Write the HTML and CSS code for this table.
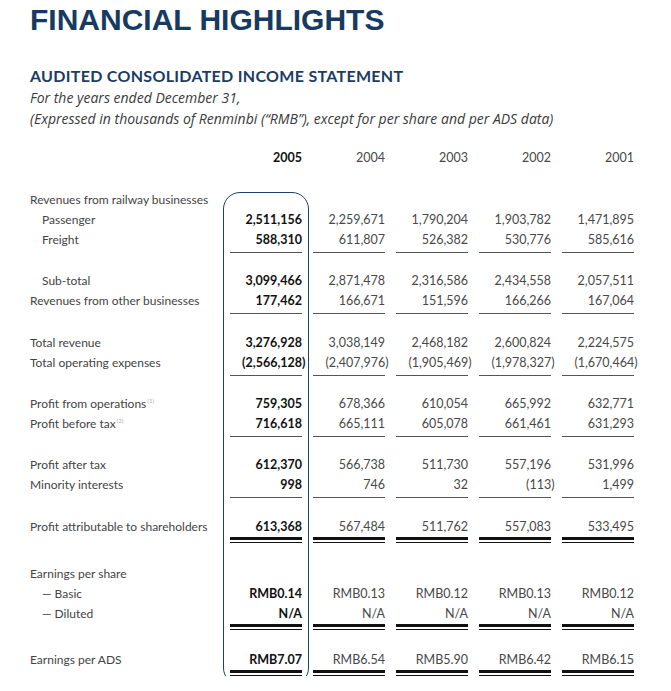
FILE: index.html
```html
<!DOCTYPE html>
<html lang="en">
<head>
<meta charset="utf-8">
<title>Financial Highlights</title>
<link rel="stylesheet" href="styles.css">
</head>
<body>
<div class="page">
  <h1 class="title">FINANCIAL HIGHLIGHTS</h1>
  <h2 class="sub">AUDITED CONSOLIDATED INCOME STATEMENT</h2>
  <p class="note first">For the years ended December 31,</p>
  <p class="note">(Expressed in thousands of Renminbi (“RMB”), except for per share and per ADS data)</p>

  <div class="fin">
    <div class="box"></div>

    <div class="l"></div><div class="n yr b">2005</div><div class="n yr">2004</div><div class="n yr">2003</div><div class="n yr">2002</div><div class="n yr">2001</div>
    <div class="gap h22"></div>

    <div class="l">Revenues from railway businesses</div><div class="n"></div><div class="n"></div><div class="n"></div><div class="n"></div><div class="n"></div>
    <div class="l in">Passenger</div><div class="n b">2,511,156</div><div class="n">2,259,671</div><div class="n">1,790,204</div><div class="n">1,903,782</div><div class="n">1,471,895</div>
    <div class="l in">Freight</div><div class="n b u">588,310</div><div class="n u">611,807</div><div class="n u">526,382</div><div class="n u">530,776</div><div class="n u">585,616</div>
    <div class="gap h18"></div>

    <div class="l in">Sub-total</div><div class="n b">3,099,466</div><div class="n">2,871,478</div><div class="n">2,316,586</div><div class="n">2,434,558</div><div class="n">2,057,511</div>
    <div class="l">Revenues from other businesses</div><div class="n b u">177,462</div><div class="n u">166,671</div><div class="n u">151,596</div><div class="n u">166,266</div><div class="n u">167,064</div>
    <div class="gap h19"></div>

    <div class="l">Total revenue</div><div class="n b">3,276,928</div><div class="n">3,038,149</div><div class="n">2,468,182</div><div class="n">2,600,824</div><div class="n">2,224,575</div>
    <div class="l">Total operating expenses</div><div class="n b u"><span class="ng">(2,566,128)</span></div><div class="n u"><span class="ng">(2,407,976)</span></div><div class="n u"><span class="ng">(1,905,469)</span></div><div class="n u"><span class="ng">(1,978,327)</span></div><div class="n u"><span class="ng">(1,670,464)</span></div>
    <div class="gap h18"></div>

    <div class="l">Profit from operations<sup class="fn">(1)</sup></div><div class="n b">759,305</div><div class="n">678,366</div><div class="n">610,054</div><div class="n">665,992</div><div class="n">632,771</div>
    <div class="l">Profit before tax<sup class="fn">(2)</sup></div><div class="n b u">716,618</div><div class="n u">665,111</div><div class="n u">605,078</div><div class="n u">661,461</div><div class="n u">631,293</div>
    <div class="gap h18"></div>

    <div class="l">Profit after tax</div><div class="n b">612,370</div><div class="n">566,738</div><div class="n">511,730</div><div class="n">557,196</div><div class="n">531,996</div>
    <div class="l">Minority interests</div><div class="n b u">998</div><div class="n u">746</div><div class="n u">32</div><div class="n u"><span class="ng">(113)</span></div><div class="n u">1,499</div>
    <div class="gap h19"></div>

    <div class="l">Profit attributable to shareholders</div><div class="n b uu">613,368</div><div class="n uu">567,484</div><div class="n uu">511,762</div><div class="n uu">557,083</div><div class="n uu">533,495</div>
    <div class="gap h21"></div>

    <div class="l">Earnings per share</div><div class="n"></div><div class="n"></div><div class="n"></div><div class="n"></div><div class="n"></div>
    <div class="l in">— Basic</div><div class="n b">RMB0.14</div><div class="n">RMB0.13</div><div class="n">RMB0.12</div><div class="n">RMB0.13</div><div class="n">RMB0.12</div>
    <div class="l in">— Diluted</div><div class="n b uu">N/A</div><div class="n uu">N/A</div><div class="n uu">N/A</div><div class="n uu">N/A</div><div class="n uu">N/A</div>
    <div class="gap h20"></div>

    <div class="l">Earnings per ADS</div><div class="n b uu">RMB7.07</div><div class="n uu">RMB6.54</div><div class="n uu">RMB5.90</div><div class="n uu">RMB6.42</div><div class="n uu">RMB6.15</div>
  </div>
</div>
</body>
</html>
```

FILE: styles.css
```css
* { box-sizing: border-box; }
html { overflow: hidden; }
html, body { margin: 0; padding: 0; background: #fff; }

.page {
  padding: 3px 0 0 30px;
  font-family: Lato, "Open Sans", "Liberation Sans", sans-serif;
}

.title {
  margin: 0;
  font: 700 30px/34px "Liberation Sans", Arial, sans-serif;
  color: #173a63;
}

.sub {
  margin: 29px 0 0;
  font: 700 16px/20px Lato, "Open Sans", sans-serif;
  letter-spacing: 0.3px;
  color: #1b3c64;
}

.note {
  margin: 0;
  font: italic 400 14px/21px "Open Sans", Lato, sans-serif;
  color: #3a3a3a;
}
.note.first { margin-top: 1px; }

.fin {
  position: relative;
  display: grid;
  grid-template-columns: 189px repeat(5, 72px);
  column-gap: 11px;
  margin-top: 19px;
}

.box {
  position: absolute;
  grid-column: 2 / 3;
  grid-row: 3 / 26;
  top: 2px;
  bottom: -9px;
  left: -7px;
  right: -7px;
  border: 1.5px solid #1f4068;
  border-radius: 17px;
  pointer-events: none;
}

.l {
  font-size: 12px;
  font-weight: 400;
  line-height: 20px;
  color: #444;
  white-space: nowrap;
}
.in { padding-left: 12px; }

.fn {
  font-size: 6px;
  line-height: 0;
  vertical-align: 5px;
  color: #aaa;
  margin-left: 1px;
}

.n {
  font-size: 12.5px;
  font-weight: 400;
  line-height: 20px;
  text-align: right;
  color: #484848;
  white-space: nowrap;
}
.b { font-weight: 700; color: #111; }

.ng { margin-right: -3.5px; }

.u {
  padding-bottom: 2px;
  border-bottom: 1px solid #555;
}
.uu {
  padding-bottom: 6px;
  background:
    linear-gradient(#111, #111) 0 calc(100% - 3px) / 100% 3px no-repeat,
    linear-gradient(#111, #111) 0 100% / 100% 1px no-repeat;
}

.gap { grid-column: 1 / -1; }
.h18 { height: 18px; }
.h19 { height: 19px; }
.h20 { height: 20px; }
.h21 { height: 21px; }
.h22 { height: 22px; }
```
